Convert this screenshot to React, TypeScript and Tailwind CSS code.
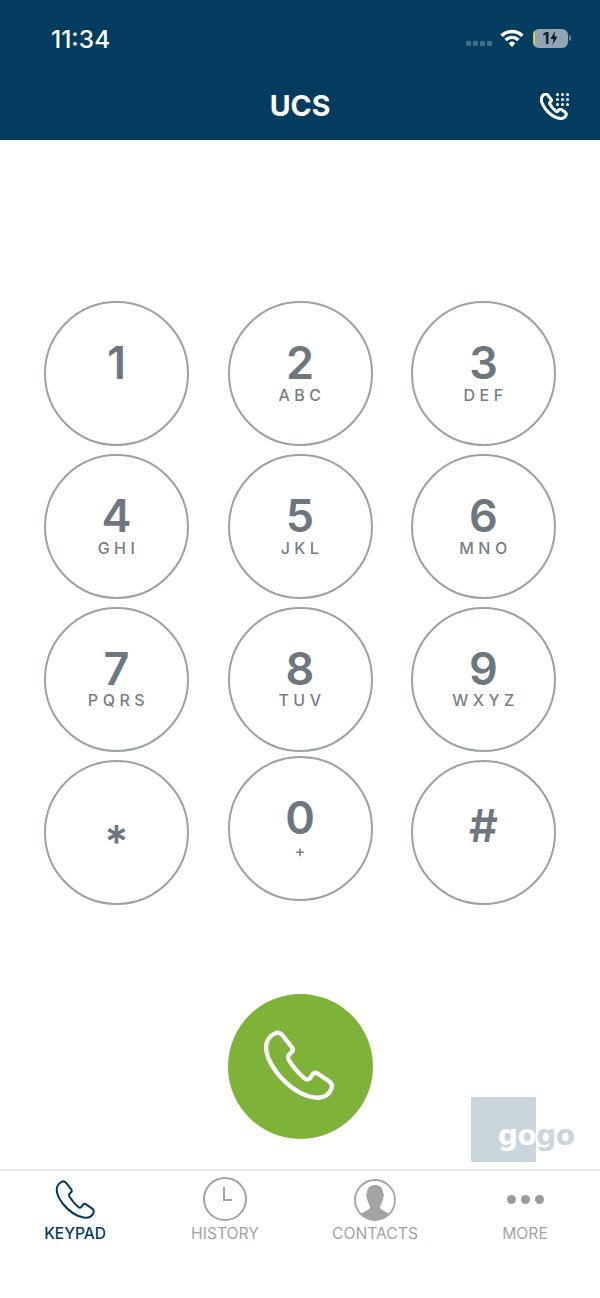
const PHONE = "M165 150 Q178 143 188 154 L218 192 Q223 200 216 206 L208 214 Q203 220 208 230 Q228 262 255 285 Q263 292 271 285 L280 272 Q286 265 295 270 L330 294 Q342 303 336 317 Q325 345 290 343 Q225 335 170 265 Q130 210 142 175 Q148 158 165 150 Z";

function Phone({ className, strokeWidth }: { className: string; strokeWidth: number }) {
  return (
    <svg viewBox="130 140 220 215" className={className} fill="none" stroke="currentColor" strokeWidth={strokeWidth} strokeLinejoin="round">
      <path d={PHONE} />
    </svg>
  );
}

type K = { d: string; l?: string; pt: string; cls?: string; lcls?: string };

const rows: K[][] = [
  [
    { d: "1", pt: "pt-[44px]" },
    { d: "2", l: "ABC", pt: "pt-[44px]" },
    { d: "3", l: "DEF", pt: "pt-[44px]" },
  ],
  [
    { d: "4", l: "GHI", pt: "pt-[44px]" },
    { d: "5", l: "JKL", pt: "pt-[44px]" },
    { d: "6", l: "MNO", pt: "pt-[44px]" },
  ],
  [
    { d: "7", l: "PQRS", pt: "pt-[44px]", lcls: "mt-[8px]" },
    { d: "8", l: "TUV", pt: "pt-[44px]", lcls: "mt-[8px]" },
    { d: "9", l: "WXYZ", pt: "pt-[44px]", lcls: "mt-[8px]" },
  ],
  [
    { d: "*", pt: "pt-[64px]" },
    { d: "0", l: "+", pt: "pt-[44px]", cls: "-mt-[4px]", lcls: "mt-[10px]" },
    { d: "#", pt: "pt-[48px]" },
  ],
];

function Key({ k }: { k: K }) {
  return (
    <button className={`w-[145px] h-[145px] shrink-0 rounded-full border-2 border-[#9ba1a4] bg-white flex flex-col items-center text-[#6c7780] ${k.pt} ${k.cls ?? ""}`}>
      <span className="h-[32px] flex items-center text-[45px] leading-[32px] font-semibold">{k.d}</span>
      {k.l && (
        <span className={`h-[14px] flex items-center text-[16px] leading-[14px] font-medium tracking-[4.5px] pl-[4px] text-[#767f85] ${k.lcls ?? "mt-[9px]"}`}>{k.l}</span>
      )}
    </button>
  );
}

function Tab({ label, active, children }: { label: string; active?: boolean; children: React.ReactNode }) {
  return (
    <div className={`flex flex-col items-center ${active ? "text-[#033c5e]" : "text-[#a3a3a3]"}`}>
      <div className="h-[56px] w-full flex items-center justify-center">{children}</div>
      <span className={`-mt-[2px] leading-[18px] ${active ? "text-[15.5px] font-medium" : "text-[15.7px] font-normal"}`}>{label}</span>
    </div>
  );
}

export default function App() {
  return (
    <div className="relative w-[600px] h-[1298px] bg-white flex flex-col overflow-hidden" style={{ fontFamily: "Inter, 'Liberation Sans', sans-serif" }}>
      <header className="h-[140px] bg-[#033c5e] text-white flex flex-col shrink-0">
        <div className="h-[76px] pl-[51px] pr-[29px] pt-[26px] flex items-start justify-between">
          <span className="mt-[1px] text-[24.5px] leading-[24px] font-medium">11:34</span>
          <div className="flex items-center h-[24px]">
            <div className="flex gap-[2px] mr-[8px] mt-[10px]">
              <i className="w-[5px] h-[5px] rounded-[1px] bg-[#3d6c8c]" />
              <i className="w-[5px] h-[5px] rounded-[1px] bg-[#3d6c8c]" />
              <i className="w-[5px] h-[5px] rounded-[1px] bg-[#3d6c8c]" />
              <i className="w-[5px] h-[5px] rounded-[1px] bg-[#3d6c8c]" />
            </div>
            <svg viewBox="0 0 24 18" className="w-[24px] h-[18px] mr-[9px]" fill="none" stroke="white" strokeWidth="3.4" strokeLinecap="butt">
              <path d="M1.5 6.8 A15 15 0 0 1 22.5 6.8" />
              <path d="M5.6 11 A9.2 9.2 0 0 1 18.4 11" />
              <path d="M12 18 L8.6 14.2 A5 5 0 0 1 15.4 14.2 Z" fill="white" stroke="none" />
            </svg>
            <div className="relative w-[35px] h-[19px] rounded-[6px] bg-[#91a5b4] flex items-center justify-center overflow-hidden">
              <i className="absolute left-0 top-[2px] bottom-[2px] w-[2px] bg-[#d9c95a]" />
              <span className="text-[16px] leading-none font-bold text-[#0e1c26]">1</span>
              <svg viewBox="0 0 8 14" className="w-[8px] h-[14px] ml-[1px]" fill="#0e1c26"><path d="M5 0 L0.5 8 H3.5 L2.5 14 L7.5 5.5 H4.5 Z" /></svg>
            </div>
            <i className="w-[2px] h-[6px] ml-[1px] rounded-r-[2px] bg-[#5a87a5]" />
          </div>
        </div>
        <div className="relative flex-1 flex items-start justify-center">
          <span className="mt-[13px] text-[28.5px] leading-[34px] font-bold">UCS</span>
          <div className="absolute left-[540px] top-[17px] w-[29px] h-[27px]">
            <Phone className="absolute left-0 top-0 w-[28px] h-[27px] text-white" strokeWidth={24} />
            <div className="absolute right-0 top-0 grid grid-cols-3 gap-[2px] bg-[#033c5e] pl-[2px] pb-[2px]">
              {Array.from({ length: 9 }).map((_, i) => (
                <i key={i} className="w-[3px] h-[3px] rounded-full bg-white" />
              ))}
            </div>
          </div>
        </div>
      </header>

      <main className="flex-1 flex flex-col pt-[161px]">
        <div className="flex flex-col gap-[8px] px-[44px]">
          {rows.map((row, i) => (
            <div key={i} className="flex justify-between items-start h-[145px]">
              {row.map((k) => (
                <Key key={k.d} k={k} />
              ))}
            </div>
          ))}
        </div>
        <div className="mt-[89px] flex justify-center">
          <button className="w-[145px] h-[145px] rounded-full bg-[#7fb239] flex items-center justify-center text-white">
            <Phone className="w-[73px] h-[72px] ml-[-1px] mt-[-2px]" strokeWidth={13} />
          </button>
        </div>
      </main>

      <div className="absolute left-[471px] top-[1097px] w-[65px] h-[65px] bg-[#c9d6dd]">
        <span className="absolute left-[27px] top-[22px] text-[28px] leading-[34px] font-bold tracking-[-0.5px] whitespace-nowrap text-white" style={{ fontFamily: "'DejaVu Sans', sans-serif" }}>
          go<span className="text-[#c9d6dd]">go</span>
        </span>
      </div>

      <nav className="h-[129px] shrink-0 border-t-2 border-[#e8e8e8] grid grid-cols-4 content-start">
        <Tab label="KEYPAD" active>
          <Phone className="w-[41px] h-[40px] mt-[2px]" strokeWidth={11} />
        </Tab>
        <Tab label="HISTORY">
          <svg viewBox="0 0 44 44" className="w-[44px] h-[44px]" fill="none" stroke="currentColor" strokeWidth="2">
            <circle cx="22" cy="22" r="21" />
            <path d="M21 10 V23 H29" />
          </svg>
        </Tab>
        <Tab label="CONTACTS">
          <svg viewBox="0 0 44 42" className="w-[44px] h-[42px] mt-[2px]" fill="none">
            <defs>
              <clipPath id="cc"><circle cx="22" cy="21" r="20" /></clipPath>
            </defs>
            <path clipPath="url(#cc)" fill="#a3a3a3" d="M22 6 C16 6 14 10 14 14 L13 15 L14 20 C15 24 17 26 17 29 C15 32 8 33 5 38 L5 44 H39 V38 C36 33 29 32 27 29 C27 26 29 24 30 20 L31 15 L30 14 C30 10 28 6 22 6 Z" />
            <circle cx="22" cy="21" r="20" stroke="#a3a3a3" strokeWidth="1.8" />
          </svg>
        </Tab>
        <Tab label="MORE">
          <div className="flex gap-[5px]">
            <i className="w-[9px] h-[9px] rounded-full bg-[#9b9b9b]" />
            <i className="w-[9px] h-[9px] rounded-full bg-[#9b9b9b]" />
            <i className="w-[9px] h-[9px] rounded-full bg-[#9b9b9b]" />
          </div>
        </Tab>
      </nav>
    </div>
  );
}
